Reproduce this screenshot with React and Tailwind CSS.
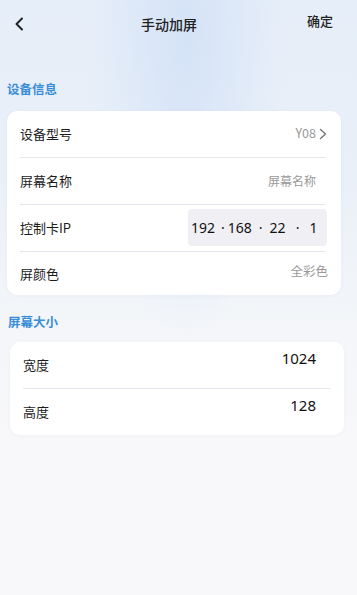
import React from 'react';

const font = { fontFamily: '"Noto Sans CJK SC", "Noto Sans", sans-serif' };

const Row = ({ label, children, divider = true, h = 'h-[46px]' }) => (
  <div className="flex flex-col">
    <div className={'flex items-center justify-between pl-[13px] pr-[14px] ' + h}>
      <span className="text-[13px] text-[#1c1c1c]">{label}</span>
      {children}
    </div>
    {divider && <div className="ml-[13px] mr-[15px] h-px bg-[#e3e7ee]" />}
  </div>
);

const SectionTitle = ({ children, className }) => (
  <div className={'text-[12.5px] font-bold text-[#3a8ed8] ' + className}>{children}</div>
);

export default function App() {
  return (
    <div
      style={font}
      className="flex h-[595px] w-[357px] flex-col overflow-hidden bg-[radial-gradient(ellipse_at_52%_6%,#d5e3f7_0,rgba(213,227,247,0)_38%),linear-gradient(180deg,#e6eef9_0%,#eaf0f8_30%,#f4f6f9_55%,#f8f8fa_75%)]"
    >
      {/* header */}
      <div className="flex h-12 items-center pl-[14px] pr-[24px]">
        <div className="flex w-[17px] items-center">
          <svg width="10" height="14" viewBox="0 0 10 14" fill="none">
            <path d="M8 1.5L2.5 7L8 12.5" stroke="#222" strokeWidth="2" strokeLinecap="round" strokeLinejoin="round" />
          </svg>
        </div>
        <div className="flex-1 pt-[1px] text-center text-[14px] font-medium text-[#222]">手动加屏</div>
        <div className="-mt-[6px] w-[26px] text-[13px] font-medium text-[#222]">确定</div>
      </div>

      <SectionTitle className="ml-[7px] mt-[32px]">设备信息</SectionTitle>

      <div className="ml-[7px] mt-[12px] w-[334px] rounded-[10px] bg-white shadow-[0_1px_4px_rgba(30,60,120,0.04)]">
        <Row label="设备型号">
          <div className="flex items-center gap-[3px] text-[12.5px] text-[#999]">
            <span>Y08</span>
            <svg width="8" height="12" viewBox="0 0 8 12" fill="none">
              <path d="M1.5 1.5L6.5 6L1.5 10.5" stroke="#777" strokeWidth="1.4" strokeLinecap="round" strokeLinejoin="round" />
            </svg>
          </div>
        </Row>
        <Row label="屏幕名称">
          <span className="pr-[11px] text-[12px] text-[#9a9a9a]">屏幕名称</span>
        </Row>
        <Row label="控制卡IP">
          <div className="flex h-[37px] w-[139px] items-center rounded-[4px] bg-[#efeff4] pl-[3px] text-[14px] text-[#111]" style={{ fontFamily: '"Noto Sans", sans-serif' }}>
            <span>192</span>
            <span className="ml-[6px] mr-[3px]">·</span>
            <span>168</span>
            <span className="mx-[7px]">·</span>
            <span>22</span>
            <span className="mx-[10px]">·</span>
            <span>1</span>
          </div>
        </Row>
        <Row label="屏颜色" divider={false} h="h-[43px]">
          <span className="-mt-[4px] -mr-[1px] text-[12.5px] text-[#999]">全彩色</span>
        </Row>
      </div>

      <SectionTitle className="ml-[8px] mt-[18px]">屏幕大小</SectionTitle>

      <div className="ml-[10px] mt-[10px] w-[334px] rounded-[10px] bg-white shadow-[0_1px_4px_rgba(30,60,120,0.04)]">
        <div className="flex flex-col">
          <div className="flex h-[46px] items-center justify-between pl-[13px] pr-[28px]">
            <span className="text-[13px] text-[#1c1c1c]">宽度</span>
            <span className="-mt-[12px] text-[15px] text-[#111]" style={{ fontFamily: '"Noto Sans", sans-serif' }}>1024</span>
          </div>
          <div className="ml-[13px] mr-[14px] h-px bg-[#e3e7ee]" />
          <div className="flex h-[46px] items-center justify-between pl-[13px] pr-[28px]">
            <span className="text-[13px] text-[#1c1c1c]">高度</span>
            <span className="-mt-[12px] text-[15px] text-[#111]" style={{ fontFamily: '"Noto Sans", sans-serif' }}>128</span>
          </div>
        </div>
      </div>
    </div>
  );
}
